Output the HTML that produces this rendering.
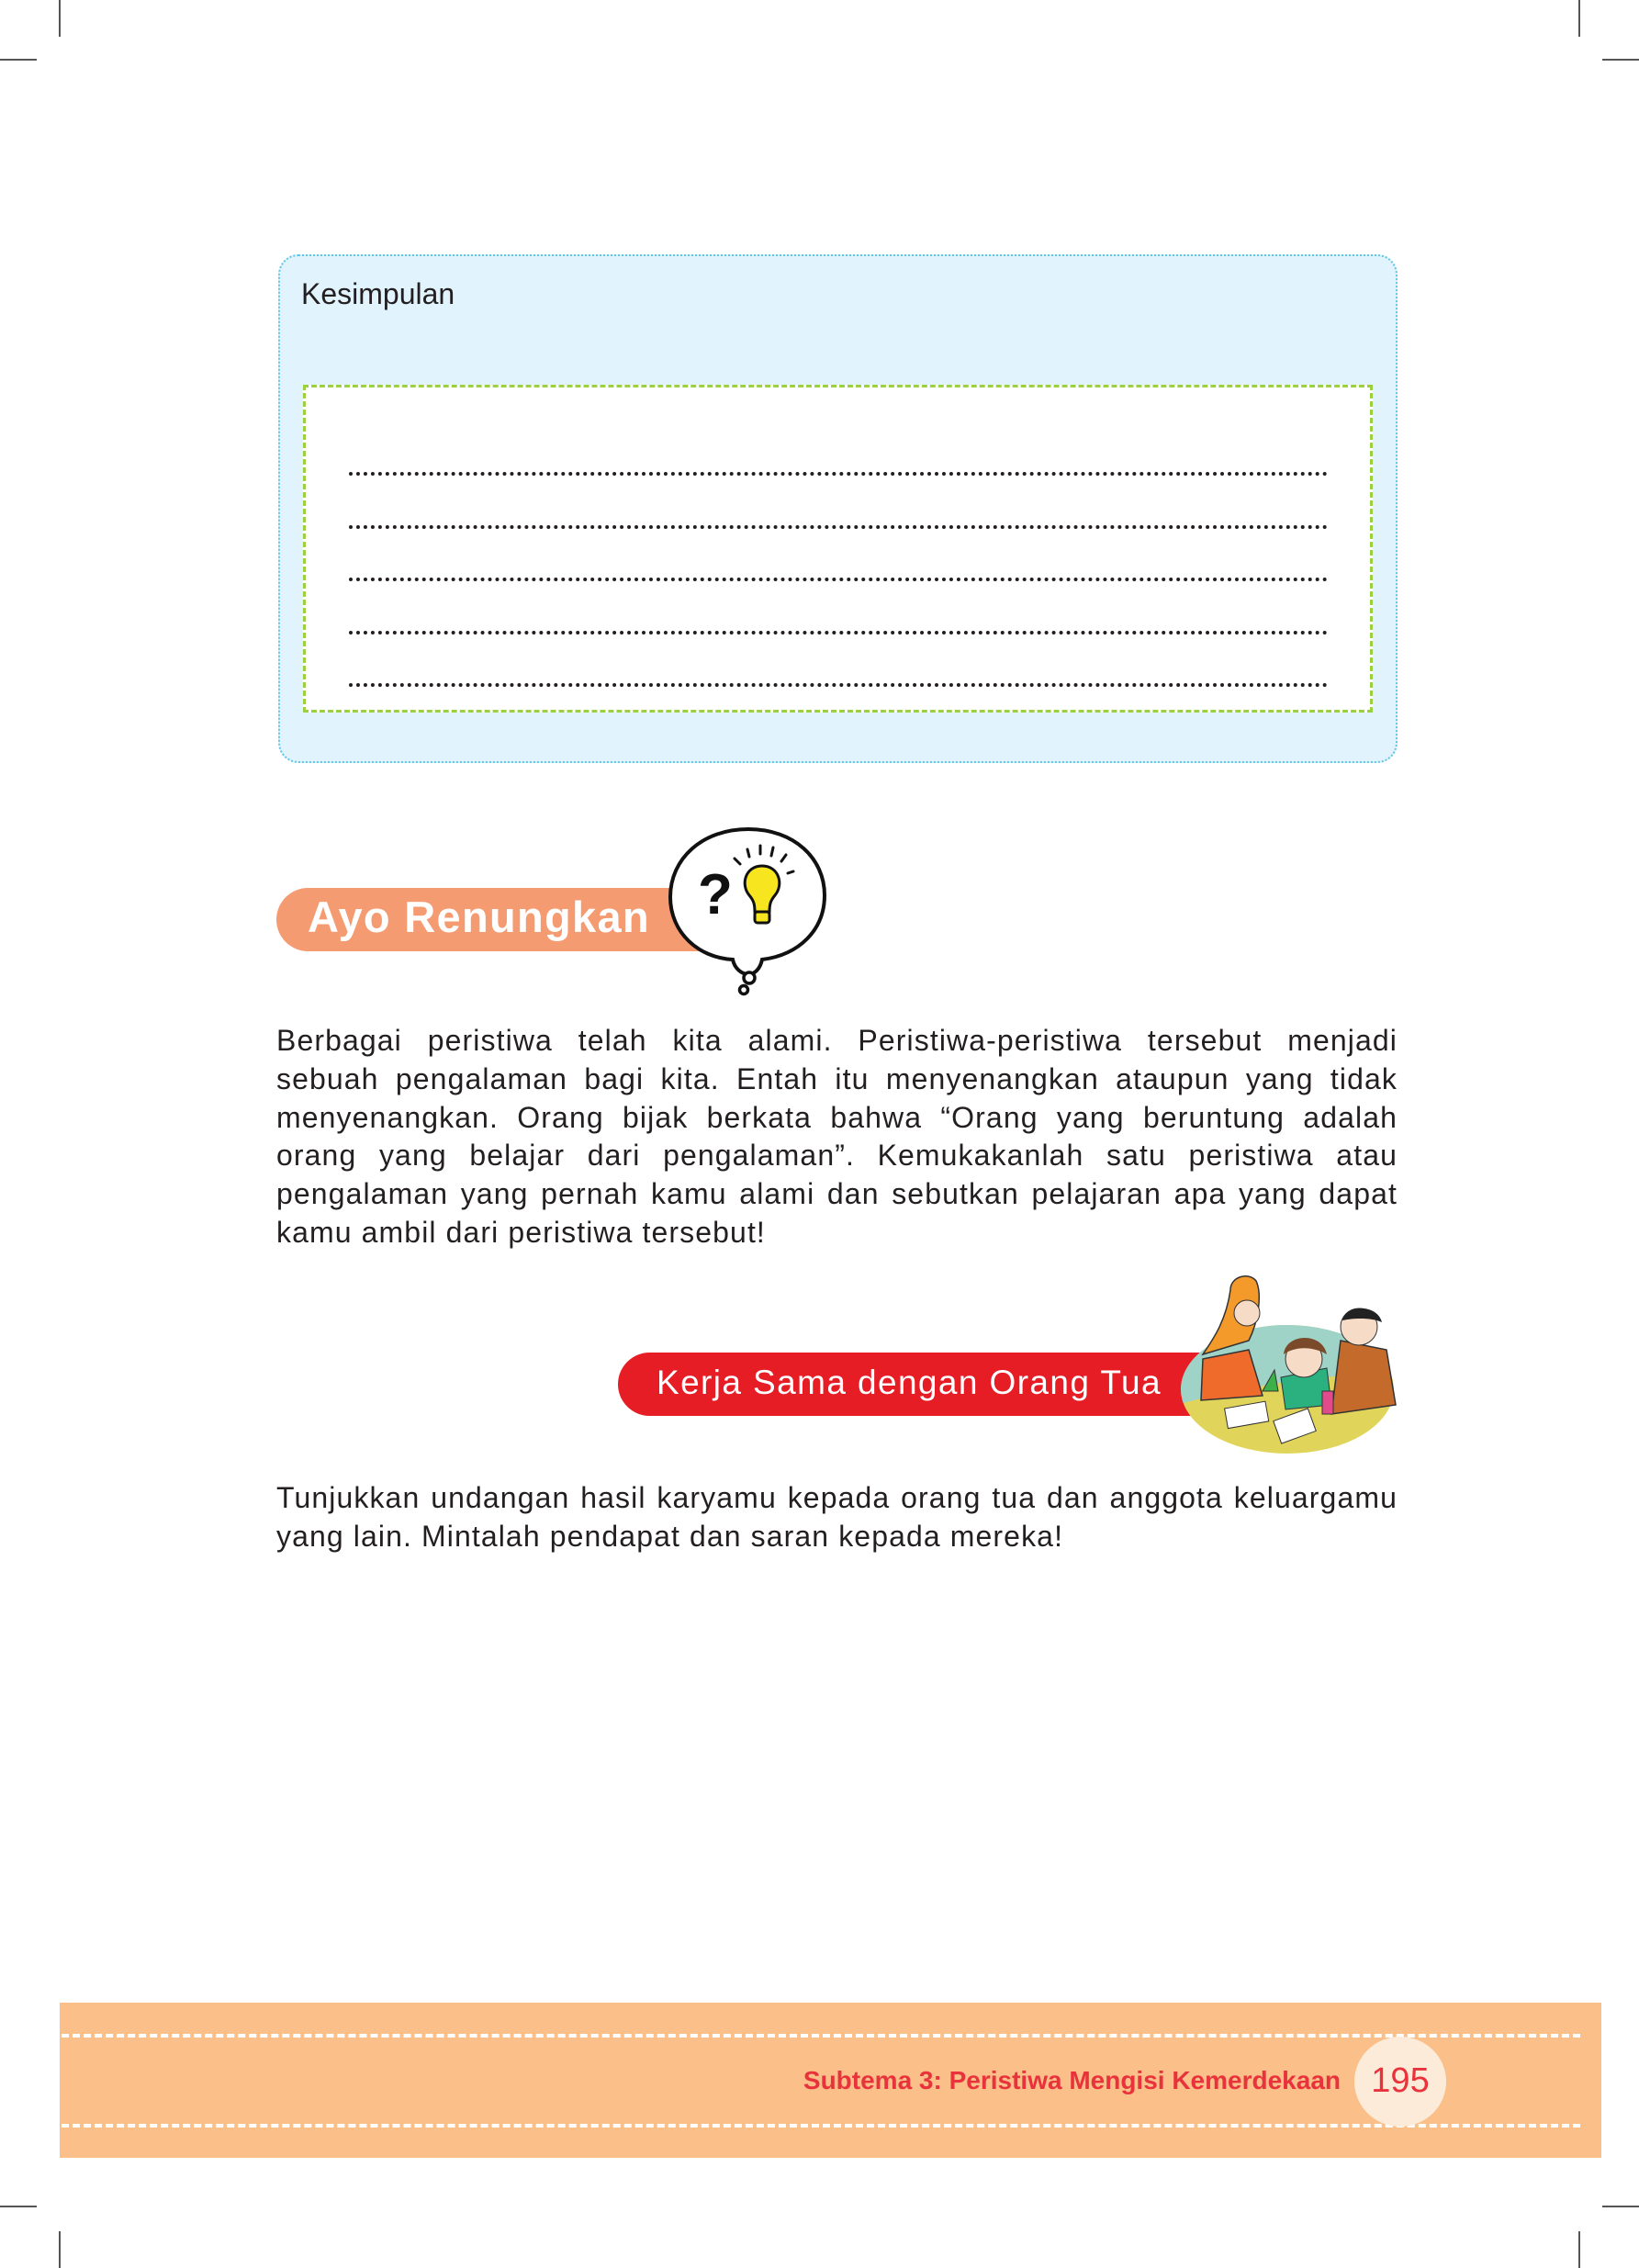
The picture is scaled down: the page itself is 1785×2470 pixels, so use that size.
<!DOCTYPE html>
<html><head><meta charset="utf-8"><style>
*{margin:0;padding:0;box-sizing:border-box}
body{width:1785px;height:2470px;background:#fff;position:relative;overflow:hidden;font-family:"Liberation Sans",sans-serif;color:#231f20}
.a{position:absolute}
.box{left:303px;top:277px;width:1219px;height:554px;background:#e1f3fc;border:2px dotted #5fc6e8;border-radius:22px}
.green{left:330px;top:419px;width:1165px;height:357px;background:#fff;border:3px dashed #9bd03f}
.dl{left:380px;width:1066px;border-top:4px dotted #231f20}
.para{left:301px;width:1221px;font-size:32px;line-height:41.8px;letter-spacing:1.1px}
.para div{text-align:justify;text-align-last:justify;white-space:nowrap}
.para div.l{text-align-last:left}
</style></head><body>
<div class="a" style="left:64px;top:0;width:2px;height:40px;background:#555"></div>
<div class="a" style="left:1719px;top:0;width:2px;height:40px;background:#555"></div>
<div class="a" style="left:0;top:64px;width:40px;height:2px;background:#555"></div>
<div class="a" style="left:1745px;top:64px;width:40px;height:2px;background:#555"></div>
<div class="a" style="left:64px;top:2430px;width:2px;height:40px;background:#555"></div>
<div class="a" style="left:1719px;top:2430px;width:2px;height:40px;background:#555"></div>
<div class="a" style="left:0;top:2402px;width:40px;height:2px;background:#555"></div>
<div class="a" style="left:1745px;top:2402px;width:40px;height:2px;background:#555"></div>

<div class="a box"></div>
<div class="a" style="left:328px;top:302px;font-size:32px;">Kesimpulan</div>
<div class="a green"></div>
<div class="a dl" style="top:514px"></div>
<div class="a dl" style="top:572px"></div>
<div class="a dl" style="top:629px"></div>
<div class="a dl" style="top:687px"></div>
<div class="a dl" style="top:744px"></div>

<div class="a" style="left:301px;top:967px;width:480px;height:69px;background:#f59b71;border-radius:35px 0 0 35px"></div>
<div class="a" style="left:335px;top:966px;font-size:47px;font-weight:bold;color:#fff;line-height:66px;letter-spacing:1.3px">Ayo Renungkan</div>
<svg class="a" style="left:720px;top:895px" width="190" height="195" viewBox="0 0 190 195">
<path d="M95 8 C45 8 10 40 10 82 C10 120 40 148 78 150 C80 160 88 166 95 166 C102 166 108 160 110 150 C150 145 178 118 178 80 C178 40 145 8 95 8Z" fill="#fff" stroke="#111" stroke-width="4"/>
<circle cx="96" cy="170" r="6" fill="#fff" stroke="#111" stroke-width="3.5"/>
<circle cx="90" cy="183" r="4.5" fill="#fff" stroke="#111" stroke-width="3.5"/>
<text x="40" y="100" font-size="62" font-weight="bold" fill="#111" font-family="Liberation Sans">?</text>
<path d="M110 48 C92 48 86 68 96 80 C101 86 102 90 102 98 L118 98 C118 90 119 86 124 80 C134 68 128 48 110 48Z" fill="#f7e51f" stroke="#111" stroke-width="3"/>
<rect x="102" y="98" width="16" height="12" rx="3" fill="#f7e51f" stroke="#111" stroke-width="3"/>
<g stroke="#111" stroke-width="3" stroke-linecap="round"><line x1="80" y1="40" x2="86" y2="46"/><line x1="94" y1="30" x2="96" y2="38"/><line x1="108" y1="26" x2="108" y2="35"/><line x1="122" y1="28" x2="120" y2="37"/><line x1="136" y1="36" x2="131" y2="43"/><line x1="144" y1="54" x2="138" y2="56"/></g>
</svg>

<div class="a para" style="top:1113px">
<div>Berbagai peristiwa telah kita alami. Peristiwa-peristiwa tersebut menjadi</div>
<div>sebuah pengalaman bagi kita. Entah itu menyenangkan ataupun yang tidak</div>
<div>menyenangkan. Orang bijak berkata bahwa “Orang yang beruntung adalah</div>
<div>orang yang belajar dari pengalaman”. Kemukakanlah satu peristiwa atau</div>
<div>pengalaman yang pernah kamu alami dan sebutkan pelajaran apa yang dapat</div>
<div class="l">kamu ambil dari peristiwa tersebut!</div>
</div>

<div class="a" style="left:673px;top:1473px;width:640px;height:69px;background:#e71d25;border-radius:35px 0 0 35px"></div>
<div class="a" style="left:715px;top:1473px;font-size:37px;color:#fff;line-height:66px;letter-spacing:1.4px">Kerja Sama dengan Orang Tua</div>
<svg class="a" style="left:1280px;top:1380px" width="260" height="210" viewBox="0 0 260 210">
<defs><clipPath id="c"><ellipse cx="122" cy="133" rx="116" ry="70"/></clipPath></defs>
<g clip-path="url(#c)"><rect x="0" y="60" width="260" height="160" fill="#e0d55a"/><path d="M0 60 H260 V120 C180 110 80 130 0 150Z" fill="#9fd3c7"/></g>
<path d="M60 25 C60 10 80 5 88 15 C95 30 90 60 80 80 L30 95 C40 80 55 60 60 25Z" fill="#f39a2a" stroke="#333" stroke-width="1.5"/>
<circle cx="78" cy="50" r="14" fill="#f6dcc6" stroke="#333"/>
<path d="M30 100 L80 90 L95 140 L28 145Z" fill="#ef6b2c" stroke="#333" stroke-width="1.5"/>
<path d="M180 80 L230 90 L240 150 L170 160Z" fill="#c46b2c" stroke="#333" stroke-width="1.5"/>
<circle cx="200" cy="65" r="20" fill="#f6dcc6" stroke="#333"/>
<path d="M182 58 C185 40 220 40 225 60 C215 55 195 55 182 58Z" fill="#222"/>
<path d="M115 120 L165 110 L170 150 L120 155Z" fill="#2bb07f" stroke="#333"/>
<circle cx="140" cy="100" r="20" fill="#f6dcc6" stroke="#333"/>
<path d="M118 95 C120 72 160 70 165 95 C150 86 130 86 118 95Z" fill="#7a4a2a"/>
<rect x="55" y="150" width="45" height="22" fill="#fff" stroke="#333" transform="rotate(-10 77 160)"/>
<rect x="110" y="160" width="40" height="26" fill="#fff" stroke="#333" transform="rotate(-20 130 173)"/>
<rect x="160" y="135" width="12" height="25" fill="#e24b8b" stroke="#333"/>
<polygon points="95,135 108,112 112,135" fill="#3db04a" stroke="#333"/>
</svg>

<div class="a para" style="top:1611px">
<div>Tunjukkan undangan hasil karyamu kepada orang tua dan anggota keluargamu</div>
<div class="l">yang lain. Mintalah pendapat dan saran kepada mereka!</div>
</div>

<div class="a" style="left:65px;top:2181px;width:1679px;height:169px;background:#fbbf89"></div>
<div class="a" style="left:67px;top:2215px;width:1654px;border-top:4px dashed #fff"></div>
<div class="a" style="left:67px;top:2313px;width:1654px;border-top:4px dashed #fff"></div>
<div class="a" style="left:1475px;top:2218px;width:100px;height:98px;border-radius:50%;background:#fdebd9"></div>
<div class="a" style="left:1475px;top:2244px;width:100px;text-align:center;font-size:38px;color:#e8333c;line-height:44px">195</div>
<div class="a" style="left:700px;top:2248px;width:760px;text-align:right;font-size:28px;font-weight:bold;color:#e8333c;line-height:36px">Subtema 3: Peristiwa Mengisi Kemerdekaan</div>
</body></html>
